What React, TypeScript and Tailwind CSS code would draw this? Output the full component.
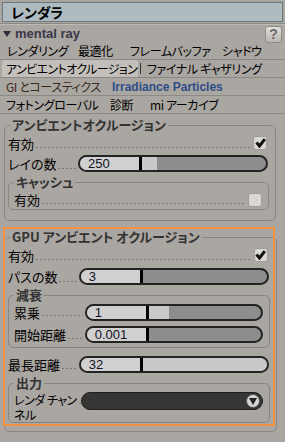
import React from "react";

const jp = "font-['Noto_Sans_CJK_JP',sans-serif] [font-feature-settings:'palt']";

const Leader: React.FC = () => (
  <div className="flex-1 self-end mb-[5px] mx-[2px] h-px bg-[repeating-linear-gradient(to_right,#7b7772_0_2px,transparent_2px_4px)]" />
);

const Check: React.FC<{ on?: boolean }> = ({ on }) => (
  <div className="w-[14px] h-[14px] rounded-[3px] border border-[#a19d98] bg-[#dad8d5] flex items-center justify-center">
    {on && (
      <svg width="11" height="10" viewBox="0 0 11 10">
        <path d="M1.5 4.5 L4.5 8 L9.8 1.2" stroke="#111" strokeWidth="3" fill="none" />
      </svg>
    )}
  </div>
);

// slider: number field, black handle, light fill, dark rest
const Slider: React.FC<{ value: string; fill: number | "all"; small?: boolean }> = ({ value, fill, small }) => (
  <div
    className={`${small ? "w-[178px]" : "w-[190px]"} shrink-0 h-[17px] rounded-full border-2 border-[#232323] bg-[#8d8d8d] flex overflow-hidden`}
  >
    <div className="w-[59px] bg-[#d0d0d0] pl-[8px] flex items-center text-[13px] font-['Liberation_Sans',sans-serif] text-[#111122] leading-none">
      {value}
    </div>
    <div className="w-[3px] bg-black" />
    {fill === "all" ? (
      <div className="flex-1 bg-[#c9c9c9]" />
    ) : (
      <div className="bg-[#c9c9c9]" style={{ width: fill }} />
    )}
  </div>
);

const Row: React.FC<{ label: string; h?: string; children: React.ReactNode }> = ({ label, h = "h-[20px]", children }) => (
  <div className={`${h} flex items-center`}>
    <span className="text-[13px] leading-none whitespace-nowrap">{label}</span>
    <Leader />
    {children}
  </div>
);

const Group: React.FC<{ title: string; sub?: boolean; className?: string; children: React.ReactNode }> = ({
  title,
  sub,
  className = "",
  children,
}) => (
  <fieldset
    className={`border border-[#8a8681] rounded-[5px] ${sub ? "pl-[5px] pr-[6px] mr-[-1px]" : "pl-[3px] pr-[7px]"} ${className}`}
  >
    <legend className={`${sub ? "" : "ml-[2px]"} px-[2px] text-[13px] leading-[16px] font-semibold text-[#333] whitespace-nowrap`}>
      {title}
    </legend>
    {children}
  </fieldset>
);

export default function App() {
  return (
    <div className={`w-[285px] h-[442px] bg-[#aaa6a1] overflow-hidden relative text-black ${jp}`}>
      {/* title */}
      <div className="px-[2px] pt-[2px]">
        <div className="h-[20px] bg-[#aebcc2] border border-[#6d787d] flex items-center pl-[8px] text-[14px] font-bold">
          レンダラ
        </div>
      </div>
      <div className="mt-[1px] border-t border-[#8a8681] border-b border-b-[#bdb9b4]" />

      {/* mental ray header */}
      <div className="h-[17px] flex items-center pl-[3px] pr-[3px]">
        <svg width="8" height="6" viewBox="0 0 8 6" className="mr-[4px]">
          <path d="M0 0 H8 L4 6 Z" fill="#2f2f3a" />
        </svg>
        <span className="font-['Liberation_Sans',sans-serif] font-bold text-[13px] text-[#3a3848]">mental ray</span>
        <div className="ml-auto mt-[2px] w-[17px] h-[17px] rounded-[3px] border border-[#8f8b86] bg-[linear-gradient(#e2e0dd,#b9b5b0)] flex items-center justify-center font-['Liberation_Sans',sans-serif] font-bold text-[14px] text-[#6d6a66]">
          ?
        </div>
      </div>

      {/* tabs */}
      <div className="text-[12px] tracking-[-0.4px] whitespace-nowrap">
        <div className="h-[18px] border-b border-[#8c8883] flex items-center pl-[7px]">
          <span className="w-[71px]">レンダリング</span>
          <span className="w-[52px]">最適化</span>
          <span className="w-[92px]">フレームバッファ</span>
          <span>シャドウ</span>
        </div>
        <div className="h-[18px] border-b border-[#8c8883] flex items-stretch pl-[2px]">
          <span className="w-[136px] bg-[#c3bfba] rounded-t-[3px] pl-[4px] flex items-center tracking-[-0.6px]">
            アンビエントオクルージョン
          </span>
          <span className="w-px bg-[#3a3a3a] my-[3px] ml-[2px]" />
          <span className="pl-[6px] flex items-center">ファイナル ギャザリング</span>
        </div>
        <div className="h-[18px] border-b border-[#8c8883] flex items-center pl-[6px]">
          <span className="w-[106px] text-[#3b2a18]">GI とコースティクス</span>
          <span className="font-['Liberation_Sans',sans-serif] font-bold text-[12px] tracking-normal text-[#2f4c88]">
            Irradiance Particles
          </span>
        </div>
        <div className="h-[18px] border-b border-[#8c8883] flex items-center pl-[6px]">
          <span className="w-[104px]">フォトングローバル</span>
          <span className="w-[40px]">診断</span>
          <span>mi アーカイブ</span>
        </div>
      </div>

      {/* content */}
      <div className="pl-[4px] pr-[9px] pt-[3px]">
        <Group title="アンビエントオクルージョン" className="pb-[10px]">
          <Row label="有効">
            <div className="mr-[1px]">
              <Check on />
            </div>
          </Row>
          <Row label="レイの数" h="h-[21px]">
            <Slider value="250" fill={15} />
          </Row>
          <Group title="キャッシュ" sub>
            <div className="h-[19px] flex items-center">
              <span className="text-[13px] leading-none">有効</span>
              <Leader />
              <Check />
            </div>
          </Group>
        </Group>

        <Group title="GPU アンビエント オクルージョン" className="mt-[8px] pb-[8px]">
          <Row label="有効">
            <div className="mr-[1px]">
              <Check on />
            </div>
          </Row>
          <Row label="パスの数" h="h-[22px]">
            <Slider value="3" fill={0} />
          </Row>
          <Group title="減衰" sub className="pb-[3px]">
            <Row label="累乗" h="h-[18px]">
              <Slider value="1" fill={20} small />
            </Row>
            <div className="mt-[3px]">
              <Row label="開始距離">
                <Slider value="0.001" fill={0} small />
              </Row>
            </div>
          </Group>
          <div className="mt-[6px]">
            <Row label="最長距離">
              <Slider value="32" fill="all" />
            </Row>
          </div>
          <Group title="出力" sub className="mt-[1px]">
            <div className="h-[31px] flex items-start">
              <div className="flex flex-col text-[12px] leading-[15px] pt-[1px] whitespace-nowrap tracking-[-0.5px]">
                <div className="flex items-end">
                  <span>レンダ チャン</span>
                  <span className="ml-[2px] mb-[3px] w-[2px] h-px bg-[#7b7772]" />
                </div>
                <span>ネル</span>
              </div>
              <div className="w-[182px] shrink-0 ml-auto mt-[1px] h-[18px] rounded-full bg-[#363534] border border-[#1f1f1f] flex items-center justify-end pr-[2px]">
                <div className="w-[14px] h-[14px] rounded-full bg-[#d6d6d6] border border-[#555] flex items-center justify-center">
                  <svg width="8" height="7" viewBox="0 0 8 7">
                    <path d="M0 0 H8 L4 7 Z" fill="#222" />
                  </svg>
                </div>
              </div>
            </div>
          </Group>
        </Group>
      </div>

      {/* highlight */}
      <div className="absolute left-[3px] top-[227px] w-[272px] h-[199px] border-2 border-[#f3933f] pointer-events-none" />
    </div>
  );
}
